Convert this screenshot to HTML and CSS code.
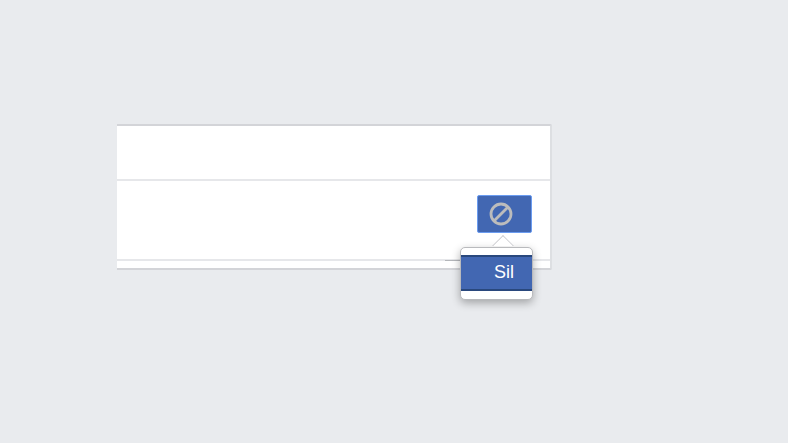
FILE: index.html
```html
<!DOCTYPE html>
<html lang="en">
<head>
    <meta charset="UTF-8">
    <meta name="viewport" content="width=device-width, initial-scale=1.0">
    <title>Sil</title>
    <link rel="stylesheet" href="styles.css">
</head>
<body>
    <div class="card">
        <div class="card-top"></div>
        <div class="card-row">
            <button class="block-button" aria-label="Block">
                <svg class="block-icon" width="24" height="24" viewBox="0 0 24 24">
                    <circle cx="12" cy="12" r="10" fill="none" stroke="#bcbcbc" stroke-width="2.8"/>
                    <line x1="5" y1="19" x2="19" y2="5" stroke="#bcbcbc" stroke-width="2.8"/>
                </svg>
            </button>
        </div>
        <div class="card-bottom"></div>

        <div class="row-line"></div>
        <div class="menu">
            <div class="menu-arrow"></div>
            <div class="menu-item">Sil</div>
        </div>
    </div>
</body>
</html>
```

FILE: styles.css
```css
body {
    margin: 0;
    height: 443px;
    overflow: hidden;
    background-color: #e9ebee;
    font-family: "Liberation Sans", Arial, sans-serif;
}

.card {
    position: relative;
    box-sizing: border-box;
    width: 435px;
    height: 146px;
    margin: 124px 0 0 117px;
    background-color: #fff;
    border-top: 2px solid #d3d4d8;
    border-right: 2px solid #dddfe2;
    border-bottom: 2px solid #d3d4d8;
    border-radius: 0 2px 2px 0;
    display: flex;
    flex-direction: column;
}

.card-top {
    height: 53px;
    border-bottom: 2px solid #e6e7ea;
}

.card-row {
    height: 80px;
    box-sizing: border-box;
    padding: 14px 18px 0 0;
    display: flex;
    justify-content: flex-end;
    border-bottom: 2px solid #e6e7ea;
}

.card-bottom {
    flex: 1;
}

.block-button {
    box-sizing: border-box;
    width: 55px;
    height: 38px;
    padding: 0 0 0 11px;
    display: flex;
    align-items: center;
    background-color: #4267b2;
    border: 1px solid #6b9cf0;
    border-radius: 2px;
}

.row-line {
    position: absolute;
    left: 328px;
    top: 134px;
    width: 20px;
    height: 1px;
    background-color: #b4b6ba;
}

.menu {
    position: absolute;
    left: 343px;
    top: 121px;
    box-sizing: border-box;
    width: 73px;
    height: 53px;
    padding: 7px 0 8px;
    background-color: #fff;
    border: 1px solid #b9babd;
    border-radius: 5px;
    box-shadow: 0 3px 9px rgba(0, 0, 0, 0.3);
}

.menu-arrow {
    position: absolute;
    left: 34px;
    top: -10px;
    box-sizing: border-box;
    width: 16px;
    height: 16px;
    background-color: #fff;
    border-top: 1px solid #c4c5c9;
    border-left: 1px solid #c4c5c9;
    transform: rotate(45deg);
    clip-path: polygon(0 0, 100% 0, 0 100%);
}

.menu-item {
    height: 36px;
    box-sizing: border-box;
    padding-left: 33px;
    line-height: 30px;
    font-size: 18px;
    color: #fff;
    background-color: #4267b2;
    border-top: 2px solid #29487d;
    border-bottom: 2px solid #29487d;
}
```
